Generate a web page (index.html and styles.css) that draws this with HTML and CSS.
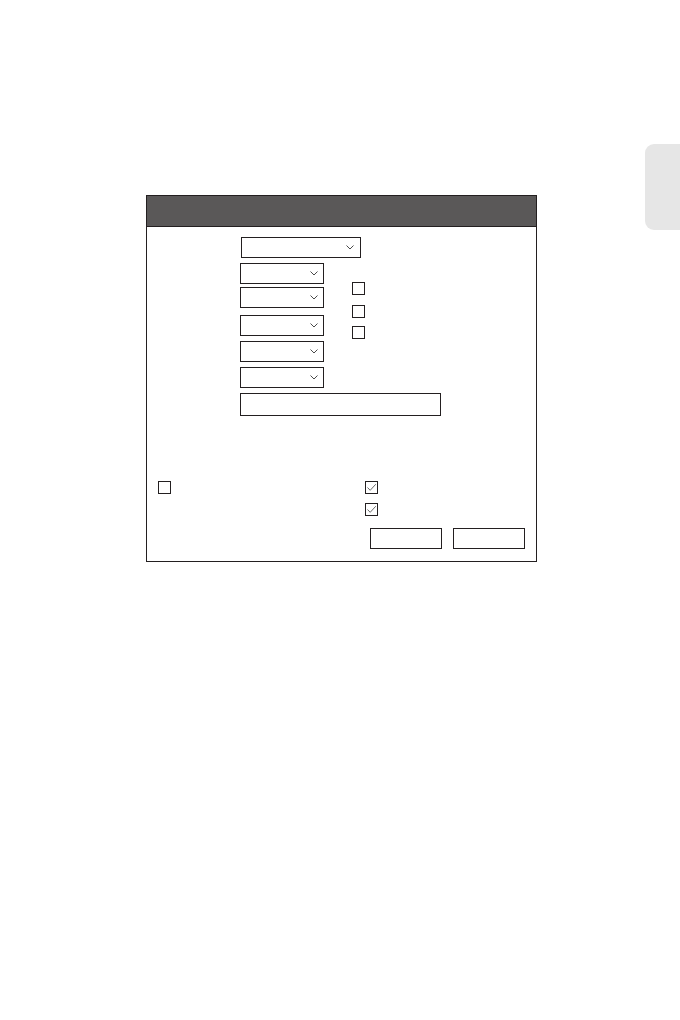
FILE: index.html
```html
<!DOCTYPE html>
<html>
<head>
<meta charset="utf-8">
<link rel="stylesheet" href="styles.css">
</head>
<body>
<div class="side-tab"></div>
<div class="dialog">
  <div class="dialog-header"></div>
  <div class="dialog-body">
    <div class="form">
      <div class="select select-wide"><svg class="chev" width="8" height="5" viewBox="0 0 8 5"><path d="M0.5 0.5 L4 4 L7.5 0.5"/></svg></div>
      <div class="cols">
        <div class="col-left">
          <div class="select s1"><svg class="chev" width="8" height="5" viewBox="0 0 8 5"><path d="M0.5 0.5 L4 4 L7.5 0.5"/></svg></div>
          <div class="select s2"><svg class="chev" width="8" height="5" viewBox="0 0 8 5"><path d="M0.5 0.5 L4 4 L7.5 0.5"/></svg></div>
          <div class="select s3"><svg class="chev" width="8" height="5" viewBox="0 0 8 5"><path d="M0.5 0.5 L4 4 L7.5 0.5"/></svg></div>
          <div class="select s4"><svg class="chev" width="8" height="5" viewBox="0 0 8 5"><path d="M0.5 0.5 L4 4 L7.5 0.5"/></svg></div>
          <div class="select s4"><svg class="chev" width="8" height="5" viewBox="0 0 8 5"><path d="M0.5 0.5 L4 4 L7.5 0.5"/></svg></div>
          <div class="textbox"></div>
        </div>
        <div class="col-right">
          <div class="cb"></div>
          <div class="cb cb2"></div>
          <div class="cb cb3"></div>
        </div>
      </div>
    </div>
    <div class="bottom">
      <div class="bottom-left">
        <div class="cb"></div>
      </div>
      <div class="bottom-right">
        <div class="cb checked"><svg width="11" height="11" viewBox="0 0 11 11"><path d="M1.5 5.5 L4.2 8.3 L9.8 2.2"/></svg></div>
        <div class="cb checked cbb2"><svg width="11" height="11" viewBox="0 0 11 11"><path d="M1.5 5.5 L4.2 8.3 L9.8 2.2"/></svg></div>
      </div>
    </div>
    <div class="buttons">
      <div class="btn"></div>
      <div class="btn"></div>
    </div>
  </div>
</div>
</body>
</html>
```
FILE: styles.css
```css
html, body {
  margin: 0;
  padding: 0;
  background: #ffffff;
  font-family: "Liberation Sans", Arial, sans-serif;
}
body {
  position: relative;
  width: 680px;
  height: 1020px;
  overflow: hidden;
}
.side-tab {
  position: absolute;
  right: 0;
  top: 144px;
  width: 35px;
  height: 86px;
  background: #e6e6e6;
  border-radius: 9px 0 0 9px;
}
.dialog {
  margin-left: 146px;
  margin-top: 195px;
  width: 391px;
  height: 367px;
  box-sizing: border-box;
  border: 1px solid #231f20;
}
.dialog-header {
  height: 30px;
  background: #5a5858;
  border-bottom: 1px solid #231f20;
}
.dialog-body {
  padding-top: 10px;
}
.form {
  padding-left: 93px;
}
.select {
  position: relative;
  box-sizing: border-box;
  width: 84px;
  height: 21px;
  border: 1px solid #231f20;
  background: #fff;
  display: flex;
  align-items: center;
  justify-content: flex-end;
  padding-right: 5px;
}
.select-wide {
  margin-left: 1px;
  width: 120px;
  padding-right: 6px;
}
.chev path {
  fill: none;
  stroke: #4a4a4a;
  stroke-width: 1;
}
.cols {
  display: flex;
  margin-top: 5px;
}
.col-left {
  display: flex;
  flex-direction: column;
  width: 84px;
}
.s2 { margin-top: 3px; }
.s3 { margin-top: 7px; }
.s4 { margin-top: 5px; }
.textbox {
  margin-top: 5px;
  box-sizing: border-box;
  width: 201px;
  height: 23px;
  border: 1px solid #231f20;
}
.col-right {
  margin-left: 28px;
  padding-top: 19px;
  display: flex;
  flex-direction: column;
}
.cb {
  box-sizing: border-box;
  width: 13px;
  height: 13px;
  border: 1px solid #231f20;
  display: flex;
  align-items: center;
  justify-content: center;
}
.cb2 { margin-top: 10px; }
.cb3 { margin-top: 8px; }
.checked path {
  fill: none;
  stroke: #6a6a6a;
  stroke-width: 1;
}
.bottom {
  display: flex;
  margin-top: 65px;
}
.bottom-left {
  width: 218px;
  box-sizing: border-box;
  padding-left: 11px;
}
.bottom-right {
  display: flex;
  flex-direction: column;
}
.cbb2 { margin-top: 9px; }
.buttons {
  display: flex;
  justify-content: flex-end;
  gap: 11px;
  padding-right: 11px;
  margin-top: 12px;
}
.btn {
  box-sizing: border-box;
  width: 72px;
  height: 21px;
  border: 1px solid #231f20;
}
```
